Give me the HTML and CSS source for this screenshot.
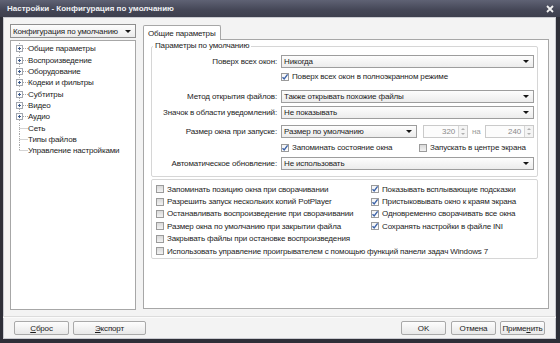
FILE: index.html
```html
<!DOCTYPE html>
<html lang="ru">
<head>
    <meta charset="UTF-8">
    <title>Настройки - Конфигурация по умолчанию</title>
    <link rel="stylesheet" href="styles.css">
</head>
<body>
    <svg class="defs" width="0" height="0">
        <symbol id="node-plus" viewBox="0 0 12 11">
            <line x1="3.5" y1="0" x2="3.5" y2="2" class="dots"/>
            <line x1="3.5" y1="9" x2="3.5" y2="11" class="dots"/>
            <line x1="7" y1="5.5" x2="12" y2="5.5" class="dots"/>
            <rect x="0.5" y="2.5" width="6" height="6" fill="#fdfdfd" stroke="#a3a8b0"/>
            <line x1="2" y1="5.5" x2="5" y2="5.5" stroke="#3c5a8c"/>
            <line x1="3.5" y1="4" x2="3.5" y2="7" stroke="#3c5a8c"/>
        </symbol>
        <symbol id="node-leaf" viewBox="0 0 12 11">
            <line x1="3.5" y1="0" x2="3.5" y2="11" class="dots"/>
            <line x1="3.5" y1="5.5" x2="12" y2="5.5" class="dots"/>
        </symbol>
        <symbol id="node-last" viewBox="0 0 12 11">
            <line x1="3.5" y1="0" x2="3.5" y2="5.5" class="dots"/>
            <line x1="3.5" y1="5.5" x2="12" y2="5.5" class="dots"/>
        </symbol>
        <symbol id="tick" viewBox="0 0 8 8">
            <path d="M1.5 4.2 L3.2 6 L6.6 1.4" fill="none" stroke="#3d63a8" stroke-width="1.4"/>
        </symbol>
    </svg>

    <div class="window">
        <div class="titlebar">
            <span class="title">Настройки - Конфигурация по умолчанию</span>
            <svg class="close" width="8" height="8" viewBox="0 0 8 8">
                <path d="M1 1 L7 7 M7 1 L1 7" stroke="#f2f2f2" stroke-width="1.8"/>
            </svg>
        </div>

        <div class="client">
            <div class="main">
                <div class="sidebar">
                    <div class="combo profile"><span>Конфигурация по умолчанию</span></div>
                    <ul class="tree">
                        <li><svg class="node"><use href="#node-plus"/></svg><span class="sel">Общие параметры</span></li>
                        <li><svg class="node"><use href="#node-plus"/></svg>Воспроизведение</li>
                        <li><svg class="node"><use href="#node-plus"/></svg>Оборудование</li>
                        <li><svg class="node"><use href="#node-plus"/></svg>Кодеки и фильтры</li>
                        <li><svg class="node"><use href="#node-plus"/></svg>Субтитры</li>
                        <li><svg class="node"><use href="#node-plus"/></svg>Видео</li>
                        <li><svg class="node"><use href="#node-plus"/></svg>Аудио</li>
                        <li><svg class="node"><use href="#node-leaf"/></svg>Сеть</li>
                        <li><svg class="node"><use href="#node-leaf"/></svg>Типы файлов</li>
                        <li><svg class="node"><use href="#node-last"/></svg>Управление настройками</li>
                    </ul>
                </div>

                <div class="pages">
                    <div class="tabs"><div class="tab">Общие параметры</div></div>
                    <div class="page">
                        <fieldset class="group">
                            <legend>Параметры по умолчанию</legend>

                            <div class="row r1">
                                <label>Поверх всех окон:</label>
                                <div class="combo"><span>Никогда</span></div>
                            </div>
                            <div class="row r2">
                                <span></span>
                                <div class="cb on"><span class="box"><svg><use href="#tick"/></svg></span>Поверх всех окон в полноэкранном режиме</div>
                            </div>
                            <div class="row r3">
                                <label>Метод открытия файлов:</label>
                                <div class="combo"><span>Также открывать похожие файлы</span></div>
                            </div>
                            <div class="row r4">
                                <label>Значок в области уведомлений:</label>
                                <div class="combo"><span>Не показывать</span></div>
                            </div>
                            <div class="row r5">
                                <label>Размер окна при запуске:</label>
                                <div class="size">
                                    <div class="combo short"><span>Размер по умолчанию</span></div>
                                    <div class="spin first"><span class="val">320</span><span class="arrows"><i class="up"></i><i class="down"></i></span></div>
                                    <span class="na">на</span>
                                    <div class="spin"><span class="val">240</span><span class="arrows"><i class="up"></i><i class="down"></i></span></div>
                                </div>
                            </div>
                            <div class="row r6">
                                <span></span>
                                <div class="pair">
                                    <div class="cb on keep"><span class="box"><svg><use href="#tick"/></svg></span>Запоминать состояние окна</div>
                                    <div class="cb"><span class="box"></span>Запускать в центре экрана</div>
                                </div>
                            </div>
                            <div class="row r7">
                                <label>Автоматическое обновление:</label>
                                <div class="combo"><span>Не использовать</span></div>
                            </div>
                        </fieldset>

                        <div class="group checks">
                            <div class="cb"><span class="box"></span>Запоминать позицию окна при сворачивании</div>
                            <div class="cb on"><span class="box"><svg><use href="#tick"/></svg></span>Показывать всплывающие подсказки</div>
                            <div class="cb"><span class="box"></span>Разрешить запуск нескольких копий PotPlayer</div>
                            <div class="cb on"><span class="box"><svg><use href="#tick"/></svg></span>Пристыковывать окно к краям экрана</div>
                            <div class="cb"><span class="box"></span>Останавливать воспроизведение при сворачивании</div>
                            <div class="cb on"><span class="box"><svg><use href="#tick"/></svg></span>Одновременно сворачивать все окна</div>
                            <div class="cb"><span class="box"></span>Размер окна по умолчанию при закрытии файла</div>
                            <div class="cb on"><span class="box"><svg><use href="#tick"/></svg></span>Сохранять настройки в файле INI</div>
                            <div class="cb"><span class="box"></span>Закрывать файлы при остановке воспроизведения</div>
                            <div class="cb wide"><span class="box"></span>Использовать управление проигрывателем с помощью функций панели задач Windows 7</div>
                        </div>
                    </div>
                </div>
            </div>

            <div class="footer">
                <button class="btn reset"><u>С</u>брос</button>
                <button class="btn export"><u>Э</u>кспорт</button>
                <button class="btn ok">OK</button>
                <button class="btn">Отмена</button>
                <button class="btn">Приме<u>н</u>ить</button>
            </div>
        </div>
    </div>
</body>
</html>
```

FILE: styles.css
```css
body { margin: 0; font-family: "Liberation Sans", Arial, sans-serif; font-size: 8px; letter-spacing: -0.15px; color: #1c1c1c; }
.defs { position: absolute; width: 0; height: 0; }
.dots { stroke: #a9a9a9; stroke-dasharray: 1 1; }

.window { width: 560px; height: 343px; box-sizing: border-box; padding: 0 4px 4px 3px; background: #2e2f38; display: flex; flex-direction: column; }
.titlebar { height: 17px; margin: 0 -4px 0 -3px; padding: 0 6px 0 7px; display: flex; align-items: center; justify-content: space-between; background: linear-gradient(#5f6274, #444656 60%, #3d3f4d); }
.title { color: #f1f2f5; font-weight: bold; font-size: 8px; letter-spacing: 0; }
.close { display: block; margin-top: 1px; }

.client { flex: 1; background: #f3f3f3; padding: 7px 7px 0 7px; display: flex; flex-direction: column; box-shadow: inset 0 0 0 1px #c9cad0; }
.main { display: flex; gap: 7px; height: 286px; }

/* combo boxes */
.combo { height: 13px; box-sizing: border-box; border: 1px solid #9d9d9d; background: linear-gradient(#fdfdfd, #ececec); display: flex; align-items: center; padding-left: 2px; white-space: nowrap; }
.combo::after { content: ""; margin-left: auto; margin-right: 4px; border-left: 3px solid transparent; border-right: 3px solid transparent; border-top: 3px solid #151515; }
.combo.profile { height: 14px; border-color: #8f8f8f; }

/* tree */
.sidebar { width: 126px; display: flex; flex-direction: column; }
.tree { list-style: none; margin: 2px 0 0 0; padding: 2px 0 0 5px; height: 270px; box-sizing: border-box; border: 1px solid #a7a7a7; background: #fff; }
.tree li { height: 11.35px; display: flex; align-items: center; white-space: nowrap; }
.node { width: 12px; height: 11px; flex: none; }

/* tab page */
.pages { flex: 1; display: flex; flex-direction: column; }
.tabs { display: flex; margin-top: 1px; }
.tab { height: 15px; box-sizing: border-box; padding: 0 4px; border: 1px solid #a7a7a7; border-bottom: none; border-radius: 2px 2px 0 0; background: #fff; display: flex; align-items: center; margin-bottom: -1px; position: relative; z-index: 1; }
.page { height: 270px; box-sizing: border-box; border: 1px solid #a7a7a7; background: #fff; padding: 0 10px 0 7px; }

.group { border: 1px solid #d6d6d6; border-radius: 2px; }
fieldset.group { margin: 1px 0 0 0; padding: 0 3px 6px 0; min-width: 0; }
legend { padding: 0 2px; margin-left: 1px; line-height: 10px; }

.row { display: grid; grid-template-columns: 125px 1fr; column-gap: 4px; align-items: center; height: 13px; }
.row label { text-align: right; white-space: nowrap; }
.r1 { margin-top: 4px; }
.r2 { margin-top: 2px; }
.r3 { margin-top: 7px; }
.r4 { margin-top: 3px; }
.r5 { margin-top: 6px; }
.r6 { margin-top: 3px; }
.r7 { margin-top: 3px; }

.size { display: flex; align-items: center; }
.combo.short { width: 136px; margin-right: 6px; }
.spin { height: 13px; box-sizing: border-box; border: 1px solid #cacaca; background: #fcfcfc; display: flex; flex: 1; color: #8a8a8a; }
.spin.first { flex: none; width: 45px; }
.spin .val { flex: 1; text-align: right; padding-right: 3px; line-height: 11px; }
.arrows { width: 8px; border-left: 1px solid #d6d6d6; display: flex; flex-direction: column; justify-content: space-around; align-items: center; background: #f4f4f4; }
.arrows i { display: block; border-left: 2px solid transparent; border-right: 2px solid transparent; }
.arrows .up { border-bottom: 2px solid #b0b0b0; }
.arrows .down { border-top: 2px solid #b0b0b0; }
.na { margin: 0 4px; color: #9a9a9a; }

.pair { display: flex; }
.cb.keep { width: 138px; }

/* checkboxes */
.cb { display: flex; align-items: center; white-space: nowrap; }
.box { width: 8px; height: 8px; box-sizing: border-box; border: 1px solid #9b9b9b; background: linear-gradient(#d9d9d9, #f2f2f2); margin-right: 3px; flex: none; display: flex; }
.cb.on .box { background: linear-gradient(#f4f4f4, #ffffff); }
.box svg { width: 8px; height: 8px; margin: -1px; }

.group.checks { margin-top: 2px; height: 80px; box-sizing: border-box; padding: 3px 0 0 4px; display: grid; grid-template-columns: 215px 1fr; grid-auto-rows: 12.4px; align-items: center; }
.cb.wide { grid-column: 1 / -1; }

/* buttons */
.footer { margin: 6px -7px 0; padding: 4px 11px 0 11px; border-top: 1px solid #dcdcdc; box-shadow: inset 0 1px #fbfbfb; display: flex; gap: 4px; flex: 1; }
.btn { height: 14px; width: 45px; padding: 0; font-family: inherit; font-size: 8px; letter-spacing: -0.15px; color: #1c1c1c; border: 1px solid #a9a9a9; border-radius: 2px; background: linear-gradient(#fdfdfd, #e8e8e8); }
.btn.reset { width: 55px; }
.btn.export { width: 73px; }
.btn.ok { margin-left: auto; margin-right: 1px; }
```
